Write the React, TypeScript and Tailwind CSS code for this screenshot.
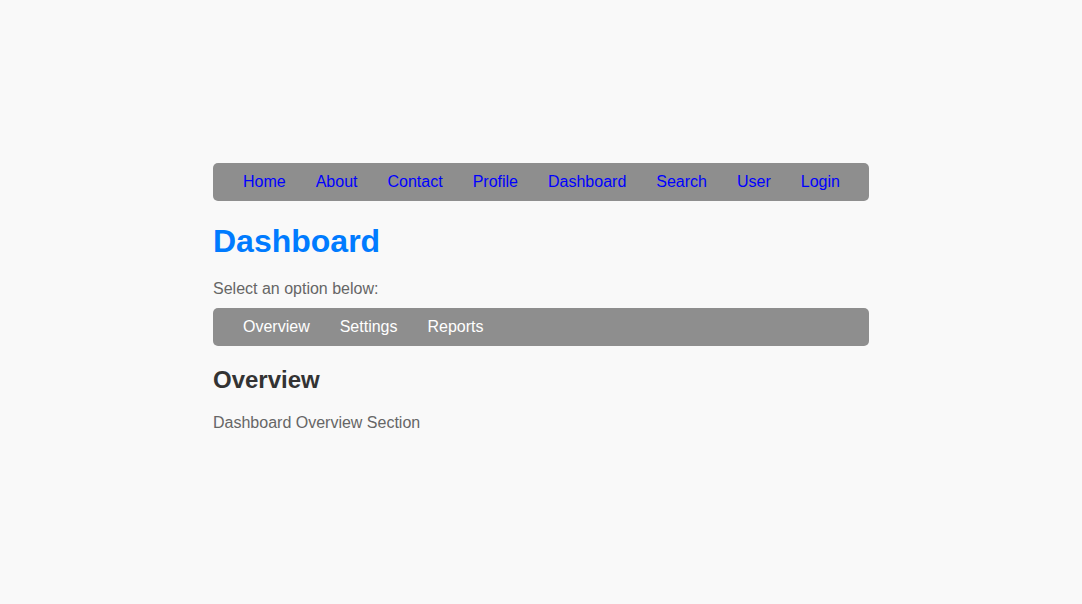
import React from "react";

const mainLinks = ["Home", "About", "Contact", "Profile", "Dashboard", "Search", "User", "Login"];
const tabs = ["Overview", "Settings", "Reports"];

export default function App() {
  return (
    <div className="min-h-screen bg-[#f9f9f9] pt-[163px] font-['Liberation_Sans',Arial,sans-serif]">
      <div className="mx-auto w-[656px]">
        {/* Top navigation */}
        <nav className="flex h-[38px] items-center rounded-[5px] bg-[#8e8e8e] pl-[15px]">
          {mainLinks.map((link) => (
            <a key={link} href="#" className="px-[15px] text-[16px] leading-[18px] text-[#0000ff]">
              {link}
            </a>
          ))}
        </nav>

        <h1 className="mt-[22px] text-[32px] font-bold leading-[37px] text-[#007bff]">Dashboard</h1>
        <p className="mt-[20px] text-[16px] leading-[18px] text-[#666]">Select an option below:</p>

        {/* Section tabs */}
        <nav className="mt-[10px] flex h-[38px] items-center rounded-[5px] bg-[#8e8e8e] pl-[15px]">
          {tabs.map((tab) => (
            <a key={tab} href="#" className="px-[15px] text-[16px] leading-[18px] text-white">
              {tab}
            </a>
          ))}
        </nav>

        <h2 className="mt-[20px] text-[24px] font-bold leading-[28px] text-[#333]">Overview</h2>
        <p className="mt-[20px] text-[16px] leading-[18px] text-[#666]">Dashboard Overview Section</p>
      </div>
    </div>
  );
}
